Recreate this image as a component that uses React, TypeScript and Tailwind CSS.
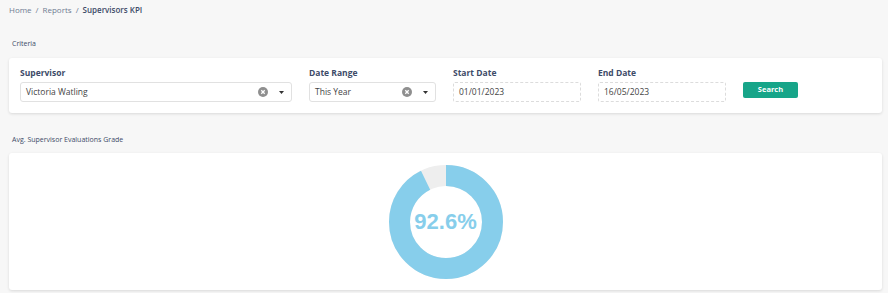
import React from 'react';

const font = { fontFamily: '"Open Sans", "Noto Sans", sans-serif' };

const ClearIcon = () => (
  <svg width="10" height="10" viewBox="0 0 10 10">
    <circle cx="5" cy="5" r="5" fill="#8f8f8f" />
    <path d="M3.3 3.3 L6.7 6.7 M6.7 3.3 L3.3 6.7" stroke="#fff" strokeWidth="1.3" />
  </svg>
);

const Caret = () => (
  <svg width="5" height="3" viewBox="0 0 5 3">
    <path d="M0 0 L5 0 L2.5 3 Z" fill="#333" />
  </svg>
);

const Select: React.FC<{ value: string; width: string }> = ({ value, width }) => (
  <div className={`${width} h-[20px] flex items-center border border-[#e1e1e1] rounded-[3px] bg-white pl-[5px] pr-[7px]`}>
    <span className="flex-1 text-[8.5px] text-[#444]">{value}</span>
    <ClearIcon />
    <span className="ml-[11px] flex items-center">
      <Caret />
    </span>
  </div>
);

const DateInput: React.FC<{ value: string }> = ({ value }) => (
  <div className="w-[128px] h-[20px] flex items-center border border-dashed border-[#dcdcdc] rounded-[2px] bg-white pl-[5px]">
    <span className="text-[8.5px] text-[#444]">{value}</span>
  </div>
);

const Label: React.FC<{ children: React.ReactNode }> = ({ children }) => (
  <div className="text-[8.5px] font-bold text-[#3d4b68] mb-[3px] leading-[12px]">{children}</div>
);

// donut for the average grade
const Donut: React.FC<{ value: number }> = ({ value }) => {
  const r = 46.5;
  const c = 2 * Math.PI * r;
  return (
    <div className="relative w-[116px] h-[116px]">
      <svg width="116" height="116" viewBox="0 0 116 116">
        <circle cx="58" cy="58" r={r} fill="none" stroke="#eeeeee" strokeWidth="21" />
        <circle
          cx="58"
          cy="58"
          r={r}
          fill="none"
          stroke="#87ceeb"
          strokeWidth="21"
          strokeDasharray={`${(c * value) / 100} ${c}`}
          transform="rotate(-90 58 58)"
        />
      </svg>
      <div
        className="absolute inset-0 flex items-center justify-center text-[22px] font-bold text-[#87ceeb]"
        style={{ fontFamily: '"Liberation Sans", Arial, sans-serif' }}
      >
        {value}%
      </div>
    </div>
  );
};

export default function App() {
  return (
    <div className="w-[888px] h-[293px] bg-[#f7f7f7] pl-[9px] pr-[6px] overflow-hidden" style={font}>
      {/* Breadcrumb */}
      <div className="h-[18px] flex items-center text-[8px] text-[#6f7c92] pt-[1px]">
        <span>Home</span>
        <span className="mx-[4px]">/</span>
        <span>Reports</span>
        <span className="mx-[4px]">/</span>
        <span className="font-semibold text-[#3d4b68]">Supervisors KPI</span>
      </div>

      <div className="pl-[3px] pt-[21px] text-[7px] text-[#3d4b68] leading-[10px]">Criteria</div>

      <div className="mt-[9px] h-[55px] bg-white rounded-[3px] shadow-[0_1px_3px_rgba(0,0,0,0.12)] flex items-start pl-[11px] pt-[9px] gap-[17px]">
        <div>
          <Label>Supervisor</Label>
          <Select value="Victoria Watling" width="w-[272px]" />
        </div>
        <div>
          <Label>Date Range</Label>
          <Select value="This Year" width="w-[127px]" />
        </div>
        <div>
          <Label>Start Date</Label>
          <DateInput value="01/01/2023" />
        </div>
        <div>
          <Label>End Date</Label>
          <DateInput value="16/05/2023" />
        </div>
        <div className="pt-[15px]">
          <button className="w-[55px] h-[16px] bg-[#17a589] rounded-[2px] text-white text-[7.5px] font-bold flex items-center justify-center">
            Search
          </button>
        </div>
      </div>

      <div className="pl-[3px] pt-[22px] text-[7px] text-[#3d4b68] leading-[10px]">
        Avg. Supervisor Evaluations Grade
      </div>

      <div className="mt-[8px] h-[137px] bg-white rounded-[3px] shadow-[0_1px_3px_rgba(0,0,0,0.12)] flex items-center justify-center">
        <Donut value={92.6} />
      </div>
    </div>
  );
}
